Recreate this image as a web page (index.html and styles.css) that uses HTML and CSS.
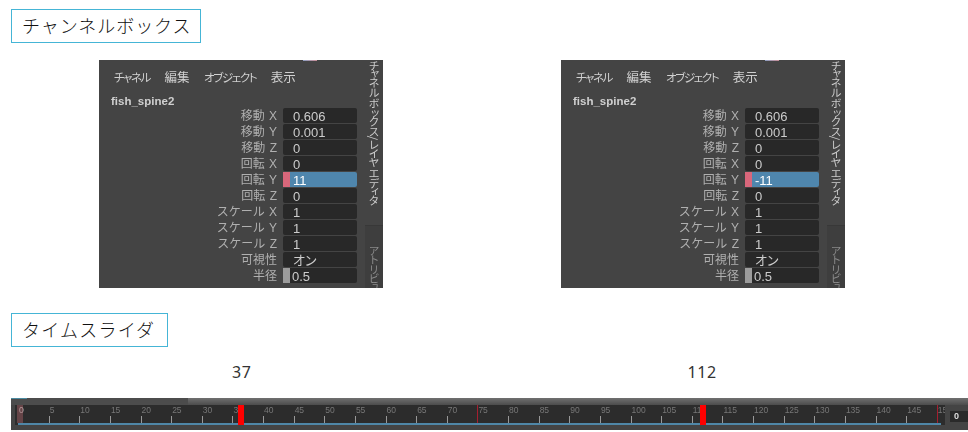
FILE: index.html
```html
<!DOCTYPE html>
<html lang="ja">
<head>
  <meta charset="UTF-8" />
  <title>チャンネルボックス</title>
  <link rel="stylesheet" href="styles.css">
</head>
<body>

  <h2 class="heading heading-channel">チャンネルボックス</h2>

  <div class="panels">
    <div class="panel">
      <div class="dots"></div>
      <div class="panel-main">
        <div class="menu">
          <span class="menu-kana">チャネル</span>
          <span>編集</span>
          <span class="menu-kana">オブジェクト</span>
          <span>表示</span>
        </div>
        <div class="node-name">fish_spine2</div>
        <div class="row"><label>移動 X</label><div class="field">0.606</div></div>
        <div class="row"><label>移動 Y</label><div class="field">0.001</div></div>
        <div class="row"><label>移動 Z</label><div class="field">0</div></div>
        <div class="row"><label>回転 X</label><div class="field">0</div></div>
        <div class="row"><label>回転 Y</label><div class="field field-active"><i class="key"></i>11</div></div>
        <div class="row"><label>回転 Z</label><div class="field">0</div></div>
        <div class="row"><label>スケール X</label><div class="field">1</div></div>
        <div class="row"><label>スケール Y</label><div class="field">1</div></div>
        <div class="row"><label>スケール Z</label><div class="field">1</div></div>
        <div class="row"><label>可視性</label><div class="field">オン</div></div>
        <div class="row"><label>半径</label><div class="field field-radius"><i class="swatch"></i>0.5</div></div>
      </div>
      <div class="tabs">
        <div class="tab tab-on">チャネル ボックス/レイヤ エディタ</div>
        <div class="tab tab-off">アトリビュー</div>
      </div>
    </div>

    <div class="panel">
      <div class="dots"></div>
      <div class="panel-main">
        <div class="menu">
          <span class="menu-kana">チャネル</span>
          <span>編集</span>
          <span class="menu-kana">オブジェクト</span>
          <span>表示</span>
        </div>
        <div class="node-name">fish_spine2</div>
        <div class="row"><label>移動 X</label><div class="field">0.606</div></div>
        <div class="row"><label>移動 Y</label><div class="field">0.001</div></div>
        <div class="row"><label>移動 Z</label><div class="field">0</div></div>
        <div class="row"><label>回転 X</label><div class="field">0</div></div>
        <div class="row"><label>回転 Y</label><div class="field field-active"><i class="key"></i>-11</div></div>
        <div class="row"><label>回転 Z</label><div class="field">0</div></div>
        <div class="row"><label>スケール X</label><div class="field">1</div></div>
        <div class="row"><label>スケール Y</label><div class="field">1</div></div>
        <div class="row"><label>スケール Z</label><div class="field">1</div></div>
        <div class="row"><label>可視性</label><div class="field">オン</div></div>
        <div class="row"><label>半径</label><div class="field field-radius"><i class="swatch"></i>0.5</div></div>
      </div>
      <div class="tabs">
        <div class="tab tab-on">チャネル ボックス/レイヤ エディタ</div>
        <div class="tab tab-off">アトリビュー</div>
      </div>
    </div>
  </div>

  <h2 class="heading heading-time">タイムスライダ</h2>

  <div class="frames">
    <span>37</span>
    <span>112</span>
  </div>

  <div class="timeline">
    <div class="timeline-top"><div class="top-left"></div><div class="top-right"></div></div>
    <div class="timeline-body">
      <div class="ruler">
        <div class="cell cell-zero"><span>0</span></div>
        <div class="cell"><span>5</span></div>
        <div class="cell"><span>10</span></div>
        <div class="cell"><span>15</span></div>
        <div class="cell"><span>20</span></div>
        <div class="cell"><span>25</span></div>
        <div class="cell"><span>30</span></div>
        <div class="cell"><span>35</span></div>
        <div class="cell"><span>40</span></div>
        <div class="cell"><span>45</span></div>
        <div class="cell"><span>50</span></div>
        <div class="cell"><span>55</span></div>
        <div class="cell"><span>60</span></div>
        <div class="cell"><span>65</span></div>
        <div class="cell"><span>70</span></div>
        <div class="cell cell-key"><span>75</span></div>
        <div class="cell"><span>80</span></div>
        <div class="cell"><span>85</span></div>
        <div class="cell"><span>90</span></div>
        <div class="cell"><span>95</span></div>
        <div class="cell"><span>100</span></div>
        <div class="cell"><span>105</span></div>
        <div class="cell"><span>110</span></div>
        <div class="cell"><span>115</span></div>
        <div class="cell"><span>120</span></div>
        <div class="cell"><span>125</span></div>
        <div class="cell"><span>130</span></div>
        <div class="cell"><span>135</span></div>
        <div class="cell"><span>140</span></div>
        <div class="cell"><span>145</span></div>
        <div class="cell cell-key"><span>150</span></div>
        <div class="blue-line"></div>
        <div class="marker marker-37"></div>
        <div class="marker marker-112"></div>
      </div>
      <div class="end-box">0</div>
    </div>
  </div>

</body>
</html>
```

FILE: styles.css
```css
body {
  margin: 0;
  width: 968px;
  height: 432px;
  overflow: hidden;
  background: #fff;
  color: #222;
  font-family: "Noto Sans CJK JP", "Noto Sans", sans-serif;
}

.heading {
  box-sizing: border-box;
  height: 34px;
  margin: 0 0 0 11px;
  padding-left: 10px;
  border: 1px solid #45b5d6;
  color: #111;
  font-size: 18px;
  font-weight: 300;
  line-height: 31px;
  letter-spacing: 0.95px;
}
.heading-channel {
  width: 190px;
  margin-top: 9px;
}
.heading-time {
  width: 157px;
  margin-top: 25px;
  letter-spacing: 1.2px;
}

.panels {
  display: flex;
  gap: 178px;
  margin: 17px 0 0 99px;
}
.panel {
  position: relative;
  display: flex;
  width: 284px;
  height: 228px;
  overflow: hidden;
  background: #444;
  color: #b0b0b0;
  filter: blur(0.45px);
}
.dots {
  position: absolute;
  top: 0;
  left: 204px;
  width: 14px;
  height: 1px;
  background: linear-gradient(90deg, #8fa0c4, #c98f98);
}
.panel-main {
  width: 266px;
}

.menu {
  display: flex;
  gap: 14.5px;
  height: 34px;
  padding-left: 15px;
  color: #d0d0d0;
  font-size: 12.5px;
  line-height: 34px;
}
.menu-kana {
  font-size: 11.5px;
  letter-spacing: -1.4px;
  font-feature-settings: "palt";
}
.node-name {
  height: 14px;
  padding-left: 12px;
  color: #d0d0d0;
  font-family: "Liberation Sans", sans-serif;
  font-size: 11.5px;
  font-weight: bold;
  line-height: 15px;
}

.row {
  display: flex;
  height: 15px;
  margin-bottom: 1px;
  font-family: "Liberation Sans", "Noto Sans CJK JP", sans-serif;
  font-size: 12px;
  line-height: 17px;
}
.row label {
  width: 178px;
  text-align: right;
  word-spacing: 1px;
}
.field {
  display: flex;
  box-sizing: border-box;
  width: 74px;
  margin-left: 6px;
  padding-left: 10px;
  border-radius: 2px;
  background: #282828;
  color: #ccc;
  font-size: 13px;
  font-feature-settings: "palt";
}
.field-active {
  padding-left: 0;
  background: #4f86ad;
  color: #fff;
}
.field-radius {
  padding-left: 0;
}
.key {
  width: 7px;
  margin-right: 3px;
  background: #d9677b;
}
.swatch {
  width: 7px;
  margin-right: 2px;
  background: #9c9c9c;
}

.tabs {
  width: 18px;
  color: #ccc;
  font-size: 11px;
  font-feature-settings: "vpal";
}
.tab {
  writing-mode: vertical-rl;
  overflow: hidden;
  white-space: nowrap;
  line-height: 18px;
  letter-spacing: -0.8px;
}
.tab-on {
  height: 165px;
}
.tab-off {
  box-sizing: border-box;
  height: 63px;
  padding-top: 19px;
  border-top: 1px solid #383838;
  background: #3e3e3e;
  color: #8a8a8a;
}

.frames {
  display: flex;
  height: 20px;
  margin-top: 15px;
  padding-left: 232px;
  gap: 436px;
  font-family: "Noto Sans", sans-serif;
  font-size: 16px;
  line-height: 20px;
  letter-spacing: 0.6px;
  color: #333;
}

.timeline {
  position: relative;
  height: 32px;
  margin: 16px 0 0 11px;
  background: #444;
  filter: blur(0.4px);
}
.timeline-top {
  display: flex;
  height: 7px;
}
.top-left {
  width: 177px;
  background: linear-gradient(90deg, #4a8aa0 16px, #4c4c4c 16px) top / 100% 1px no-repeat, #4c4c4c;
}
.top-right {
  flex: 1;
  background: linear-gradient(#707070, #4c4c4c);
}
.timeline-body {
  display: flex;
  padding-left: 4px;
}
.ruler {
  position: relative;
  display: flex;
  box-sizing: border-box;
  width: 932px;
  height: 20px;
  padding-left: 3px;
  overflow: hidden;
  background: #2c2c2c;
}
.cell {
  position: relative;
  flex: 0 0 30.63px;
  color: #777;
  font-family: "Liberation Sans", sans-serif;
  font-size: 8.5px;
  line-height: 11px;
}
.cell span {
  position: absolute;
  top: 0;
  left: 1px;
}
.cell::after {
  content: "";
  position: absolute;
  top: 11px;
  left: 0;
  width: 1px;
  height: 7px;
  background: #999;
}
.cell-zero {
  color: #ddd;
}
.cell-zero::after {
  top: 0;
  left: -1px;
  width: 6px;
  height: 18px;
  background: rgba(150, 90, 95, 0.55);
}
.cell-key::after {
  top: 0;
  height: 18px;
  background: #a41f30;
}
.blue-line {
  position: absolute;
  top: 18px;
  left: 3px;
  right: 4px;
  height: 2px;
  background: #4f87a8;
}
.marker {
  position: absolute;
  top: 0;
  width: 6px;
  height: 25px;
  background: #f00;
}
.marker-37 {
  left: 223px;
}
.marker-112 {
  left: 685px;
}
.end-box {
  box-sizing: border-box;
  width: 18px;
  height: 11px;
  margin: 6px 0 0 5px;
  padding-left: 4px;
  background: #2a2a2a;
  color: #ddd;
  font-family: "Liberation Sans", sans-serif;
  font-size: 9px;
  font-weight: bold;
  line-height: 11px;
}
```
